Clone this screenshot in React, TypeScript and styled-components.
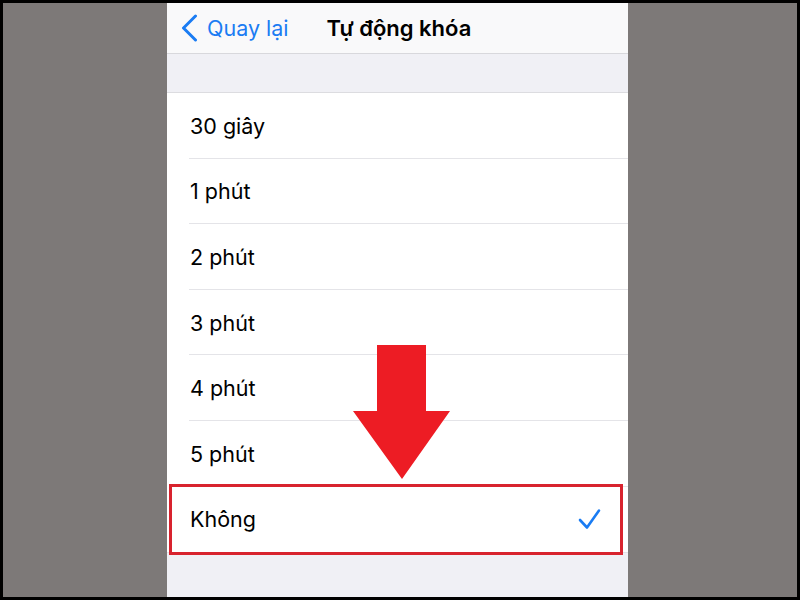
import React from "react";
import styled, { createGlobalStyle } from "styled-components";

const GlobalStyle = createGlobalStyle`
  html, body {
    margin: 0;
    padding: 0;
    background: #000;
  }
  * {
    box-sizing: border-box;
  }
`;

const blue = "#1a7cf3";

const Frame = styled.div`
  width: 800px;
  height: 600px;
  border: 3px solid #000;
  background: #7d7978;
  display: grid;
  grid-template-columns: 164px 461px 1fr;
  font-family: Inter, "Noto Sans", "Liberation Sans", sans-serif;
`;

const Phone = styled.div`
  grid-column: 2;
  position: relative;
  display: flex;
  flex-direction: column;
  background: #f0f0f5;
  overflow: hidden;
`;

const NavBar = styled.div`
  height: 51px;
  flex-shrink: 0;
  background: #f9f9fa;
  border-bottom: 1px solid #d8d8dc;
  display: flex;
  align-items: center;
  padding-left: 14px;
`;

const BackButton = styled.div`
  display: flex;
  align-items: center;
  gap: 9px;
  color: ${blue};
  font-size: 21.5px;
`;

const Title = styled.div`
  margin-left: 38px;
  font-size: 22px;
  font-weight: 600;
  color: #000;
`;

const Spacer = styled.div`
  height: 39px;
  flex-shrink: 0;
  border-bottom: 1px solid #dcdce0;
`;

const List = styled.div`
  background: #fff;
  display: flex;
  flex-direction: column;
  border-bottom: 1px solid #e2e2e6;
`;

const Row = styled.div<{ $last?: boolean }>`
  position: relative;
  height: 65.6px;
  display: flex;
  align-items: center;
  justify-content: space-between;
  padding: 0 26px 0 23px;
  font-size: 21.5px;
  color: #000;

  &::after {
    content: "";
    display: ${(p) => (p.$last ? "none" : "block")};
    position: absolute;
    left: 22px;
    right: 0;
    bottom: 0;
    height: 1px;
    background: #e4e4e8;
  }
`;

const Highlight = styled.div`
  position: absolute;
  left: 2px;
  right: 5px;
  top: -3px;
  bottom: -3px;
  border: 3px solid #d8232e;
  pointer-events: none;
`;

const Arrow = styled.svg`
  position: absolute;
  left: 186px;
  top: 339px;
`;

const Check = () => (
  <svg width="24" height="22" viewBox="0 0 24 22">
    <polyline
      points="2,12 9,19.5 21,2.5"
      fill="none"
      stroke={blue}
      strokeWidth="2.6"
      strokeLinecap="round"
      strokeLinejoin="round"
    />
  </svg>
);

const Chevron = () => (
  <svg width="17" height="28" viewBox="0 0 17 28">
    <polyline
      points="14.5,2 2.5,14 14.5,26"
      fill="none"
      stroke={blue}
      strokeWidth="3"
      strokeLinecap="round"
      strokeLinejoin="round"
    />
  </svg>
);

const options = ["30 giây", "1 phút", "2 phút", "3 phút", "4 phút", "5 phút", "Không"];
const selected = "Không";

export default function App() {
  return (
    <>
      <GlobalStyle />
      <Frame>
        <Phone>
          <NavBar>
            <BackButton>
              <Chevron />
              Quay lại
            </BackButton>
            <Title>Tự động khóa</Title>
          </NavBar>
          <Spacer />
          <List>
            {options.map((o, i) => (
              <Row key={o} $last={i === options.length - 1}>
                {o}
                {o === selected && <Check />}
                {o === selected && <Highlight />}
              </Row>
            ))}
          </List>
          <Arrow width="100" height="140" viewBox="0 0 100 140">
            <polygon
              points="24,3 73,3 73,69 97,69 49,137 0,69 24,69"
              fill="#ed1c24"
            />
          </Arrow>
        </Phone>
      </Frame>
    </>
  );
}
